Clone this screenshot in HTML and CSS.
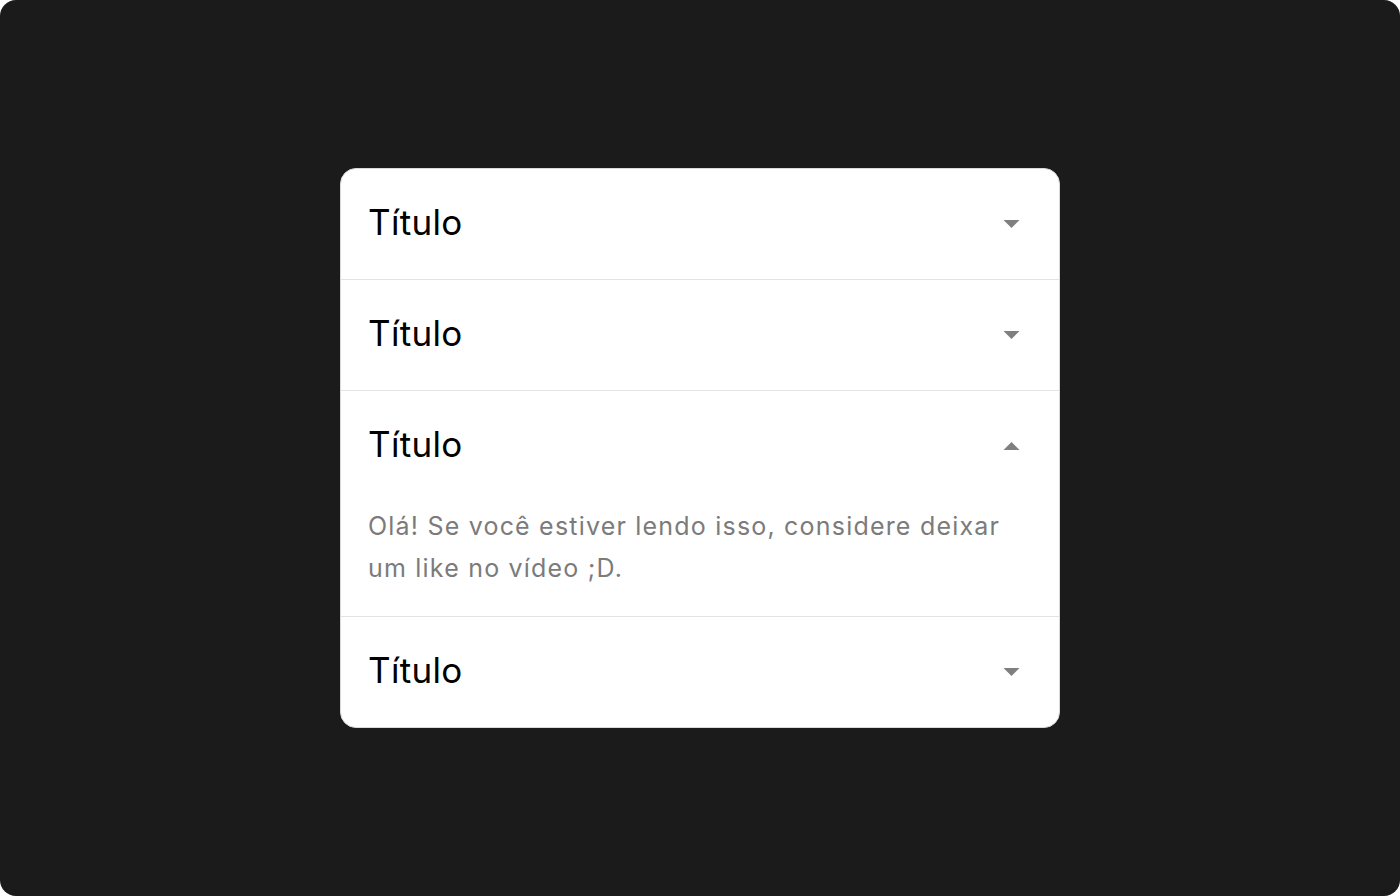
FILE: index.html
```html
<!DOCTYPE html>
<html lang="pt">
<head>
<meta charset="utf-8">
<title>Accordion</title>
<link rel="stylesheet" href="styles.css">
</head>
<body>
<main class="screen">
  <section class="accordion">
    <div class="item">
      <div class="header">
        <span class="title">Título</span>
        <svg class="arrow" width="16" height="8" viewBox="0 0 16 8"><path d="M0 0H16L8 8Z" fill="#7f7f7f"/></svg>
      </div>
    </div>
    <div class="item">
      <div class="header">
        <span class="title">Título</span>
        <svg class="arrow" width="16" height="8" viewBox="0 0 16 8"><path d="M0 0H16L8 8Z" fill="#7f7f7f"/></svg>
      </div>
    </div>
    <div class="item">
      <div class="header">
        <span class="title">Título</span>
        <svg class="arrow" width="16" height="8" viewBox="0 0 16 8"><path d="M0 8H16L8 0Z" fill="#7f7f7f"/></svg>
      </div>
      <p class="body">Olá! Se você estiver lendo isso, considere deixar um like no vídeo ;D.</p>
    </div>
    <div class="item">
      <div class="header">
        <span class="title">Título</span>
        <svg class="arrow" width="16" height="8" viewBox="0 0 16 8"><path d="M0 0H16L8 8Z" fill="#7f7f7f"/></svg>
      </div>
    </div>
  </section>
</main>
</body>
</html>
```
FILE: styles.css
```css
html, body {
  margin: 0;
  padding: 0;
  background: #ffffff;
}
.screen {
  width: 1400px;
  height: 896px;
  background: #1b1b1b;
  border-radius: 16px;
  display: flex;
  align-items: center;
  justify-content: center;
  font-family: Inter, "Noto Sans", sans-serif;
}
.accordion {
  width: 718px;
  background: #ffffff;
  border: 1px solid #d9d9d9;
  border-radius: 16px;
  overflow: hidden;
  margin-top: -1px;
}
.item + .item {
  border-top: 1px solid #e3e3e3;
}
.header {
  height: 110px;
  display: flex;
  align-items: center;
  justify-content: space-between;
  padding: 0 39px 0 27px;
}
.title {
  font-size: 35px;
  line-height: 42px;
  color: #000000;
  letter-spacing: 0.3px;
  margin-bottom: 3px;
}
.arrow {
  display: block;
  width: 17px;
  height: 8px;
}
.body {
  margin: 0;
  padding: 4px 40px 27px 27px;
  font-size: 25px;
  line-height: 42px;
  letter-spacing: 1.2px;
  color: #7b7b7b;
}
```
